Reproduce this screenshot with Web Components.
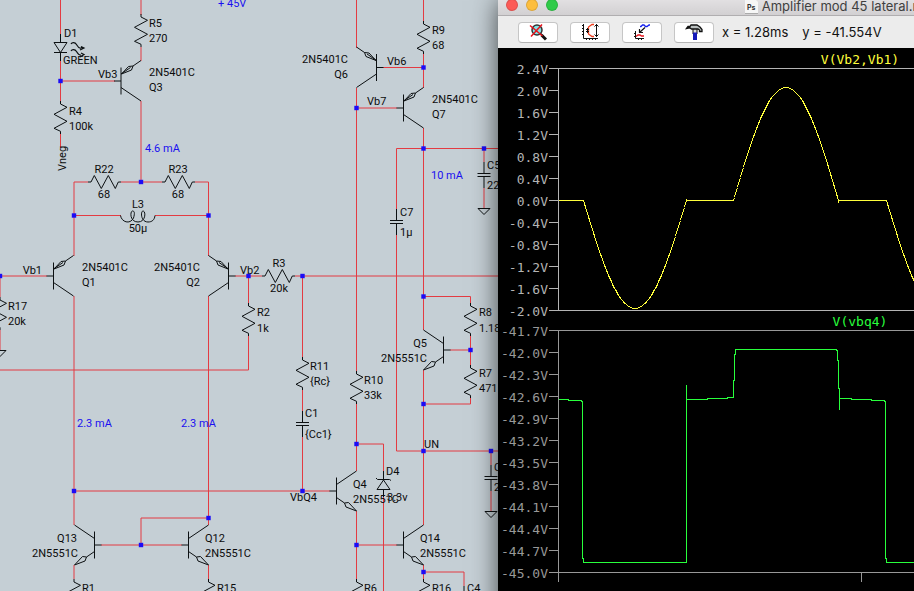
<!DOCTYPE html>
<html lang="en">
<head>
<meta charset="utf-8">
<title>Amplifier schematic</title>
<style>
html, body { margin: 0; height: 100%; overflow: hidden; background: #c5cfd5; }
body { font-family: "Noto Sans", sans-serif; }
</style>
</head>
<body>
<desk-top>
  <schematic-sheet></schematic-sheet>
  <plot-window slot="window"></plot-window>
</desk-top>

<script>
class DeskTop extends HTMLElement {
  constructor() {
    super();
    this.attachShadow({ mode: 'open' }).innerHTML = `
      <style>
        :host { display: block; position: relative; min-height: 100%; overflow: hidden; }
        ::slotted(plot-window) { position: absolute; left: 498px; top: -7px; }
      </style>
      <slot></slot><slot name="window"></slot>`;
  }
}

/* Schematic: wires, parts and labels on a free canvas */
class SchematicSheet extends HTMLElement {
  constructor() {
    super();
    const wires = `
      M60.5 0V35M60.5 60V102M60.5 134V148M60.5 81H115M141 0V15M141 47V61M141 101V182
      M74 182H88M121 182H162M195 182H208.5M74 182V256M208.5 182V256
      M74 215.5H121M155 215.5H208.5M0 276H47M235 276H262M295 276H498M0 276V297M0 330V350
      M248.5 276V304M248.5 336V370H0M74 296V525M208.5 296V525M74 491H330
      M208.5 518H141V545M101 545H182M74 565V579M208.5 565V579
      M302.5 276V358M302.5 390V411M302.5 437V491M356.5 0V48M356.5 88V371M356.5 404V471M356.5 511V579
      M356.5 108H397M356.5 545H397M356.5 444H383.5V471M383.5 497V600
      M498 148.5H396.5V209M396.5 235V451H498M423.5 0V22M423.5 54V88M423.5 67.5H383
      M423.5 128V330M423.5 370V525M423.5 565V579M423.5 572H464V586
      M423.5 296.5H470.5V304M470.5 336V365M470.5 398V404H423.5M450 350H470.5
      M484 148.5V162M484 188V208M491 451V465M491 491V511`;
    const dots = [[60.5,81],[141,182],[74,215.5],[208.5,215.5],[0,276],[248.5,276],[302.5,276],
      [74,491],[302.5,491],[208.5,518],[141,545],[356.5,108],[423.5,67.5],[423.5,148.5],[484,148.5],
      [423.5,296.5],[470.5,350],[423.5,404],[423.5,451],[491,451],[356.5,444],[356.5,545],[423.5,572]];
    const parts = {
      res: [[60.5,101],[141,14],[423.5,21],[0,297],[248.5,303],[302.5,357],[356.5,371],[470.5,303],
        [470.5,365],[74,579],[208.5,579],[356.5,579],[423.5,579]],
      hres: [[88,182],[162,182],[262,276]],
      pnp: [[121,81],[53.5,276],[403.5,108]],
      pnpm: [[228.5,276],[376.5,67.5]],
      npn: [[188.5,545],[336.5,491],[403.5,545]],
      npnm: [[94.5,545],[443.5,350]],
      cap: [[302.5,411],[396.5,209],[484,162],[491,465]],
      gnd: [[484,208],[491,511],[0,350]]
    };
    const attrs = { hres: ['res', ' rotate(-90)'], pnpm: ['pnp', ' scale(-1 1)'], npnm: ['npn', ' scale(-1 1)'] };
    const uses = Object.entries(parts).map(([k, list]) => {
      const [id, extra] = attrs[k] || [k, ''];
      return list.map(([x, y]) => `<use href="#${id}" transform="translate(${x} ${y})${extra}"/>`).join('');
    }).join('');
    /* x, baseline, text, anchor (s/m/e), class */
    const labels = [
      [64,37,'D1'],[63,64,'GREEN'],[98,78,'Vb3'],[69,115,'R4'],[69,130,'100k'],[149,27,'R5'],[149,42,'270'],
      [149,76,'2N5401C'],[149,91,'Q3'],[104,173,'R22','m'],[104,198,'68','m'],[178,173,'R23','m'],[178,198,'68','m'],
      [138,208,'L3','m'],[138,232,'50µ','m'],[42,274,'Vb1','e'],[82,271,'2N5401C'],[82,286,'Q1'],
      [200,271,'2N5401C','e'],[200,286,'Q2','e'],[240,274,'Vb2'],[8,310,'R17'],[8,325,'20k'],
      [257,316,'R2'],[257,332,'1k'],[279,267,'R3','m'],[279,292,'20k','m'],
      [77,542,'Q13','e'],[78,557,'2N5551C','e'],[205,542,'Q12'],[205,557,'2N5551C'],[82,592,'R1'],[217,592,'R15'],
      [348,63,'2N5401C','e'],[348,78,'Q6','e'],[387,65,'Vb6'],[367,105,'Vb7'],[432,34,'R9'],[432,49,'68'],
      [432,103,'2N5401C'],[432,118,'Q7'],[487,169,'C5'],[487,189,'220µ'],[400,216,'C7'],[400,236,'1µ'],
      [427,347,'Q5','e'],[427,362,'2N5551C','e'],[479,316,'R8'],[479,332,'1.18k'],[479,377,'R7'],[479,392,'471'],
      [310,370,'R11'],[310,385,'{Rc}'],[364,384,'R10'],[364,399,'33k'],[305,417,'C1'],[305,438,'{Cc1}'],
      [290,501,'VbQ4'],[353,488,'Q4'],[353,503,'2N5551C'],[386,475,'D4'],[387,501,'3.3v'],[424,448,'UN'],
      [420,542,'Q14'],[420,557,'2N5551C'],[364,592,'R6'],[432,592,'R16'],[467,592,'C4'],[494,471,'C6'],[494,491,'220µ'],
      [218,7,'+ 45V','','b'],[145,152,'4.6 mA','','b'],[77,427,'2.3 mA','','b'],[181,427,'2.3 mA','','b'],[431,179,'10 mA','','b']
    ];
    const anchor = { m: 'middle', e: 'end' };
    const texts = labels.map(([x, y, t, a, c]) =>
      `<text x="${x}" y="${y}" text-anchor="${anchor[a] || 'start'}"${c ? ' class="note"' : ''}>${t}</text>`).join('');
    this.attachShadow({ mode: 'open' }).innerHTML = `
      <style>
        :host { display: block; height: 100vh; background: #c5cfd5; }
        svg { display: block; width: 100%; height: 100%; }
        text { font: 11px Roboto, "Noto Sans", sans-serif; fill: #0c0c0c; }
        .note { fill: #1a10f0; }
        .wire { fill: none; stroke: #e33b42; stroke-width: 1; }
        .part { fill: none; stroke: #0c1012; stroke-width: 1; }
        .dot { fill: #1c0cf5; }
      </style>
      <svg role="img" aria-label="Amplifier schematic">
        <defs>
          <path id="res" d="M0 0V3L6.5 6.3L-6.5 13.3L6.5 20.3L-6.5 27.3L0 30.3V33"/>
          <path id="pnp" d="M-7 0H0M0 -13.5V13.5M0 6.5L20 20M0 -7L9.5 -13.5M12 -15L20 -20.5M0.5 -7L7.5 -14.5L12 -15L10.5 -11Z"/>
          <path id="npn" d="M-7 0H0M0 -13.5V13.5M0 -6.5L20 -20M0 6.5L8 12M20 20L12 11.5L8 12L9.5 16Z"/>
          <path id="cap" d="M0 0V11.5M-6.500 11.500H6.500M-6.500 14.500H6.500M0 14.500V26"/>
          <path id="gnd" d="M-6 0.500H6L0 6.500Z"/>
        </defs>
        <path class="wire" d="${wires}"/>
        <g class="part">${uses}
          <path d="M60.500 34V42.500M54 42.500H67L60.500 52.500ZM54 52.500H67M60.500 52V61"/>
          <path stroke-width="1.200" d="M71 44C72 42 75 42 76.500 44.500S79 49 81 48M81 47.500L84 48M80 50L84 48L81 46.500M71 51C72 49 75 49 76.500 51.500S79 55.500 81 55M80 57L84 54.500L81 53"/>
          <path d="M120.500 215.500C121.500 222 130 225 133.500 218C135 213 134.500 211 132.500 211C130 211 129.500 222 138 222C146 222 146 211 143 211C140.500 211 140.500 222 148 222C152 222 154.500 220 155 215.500"/>
          <path d="M383.500 471V480M376 478L377.500 479.500H389.500L391 480.500M383.500 480L377 489.500H390ZM383.500 489V497M464 586V600"/>
        </g>
        ${texts}
        <text transform="translate(66 171) rotate(-90)">Vneg</text>
        <g class="dot">${dots.map(([x, y]) => `<rect x="${x - 2.2}" y="${y - 2.2}" width="4.4" height="4.4"/>`).join('')}</g>
      </svg>`;
  }
}

class PlotWindow extends HTMLElement {
  constructor() {
    super();
    /* Differential input voltage: alternating half sines with flat gaps */
    let a = 'M0.5 132.500H25.500';
    for (let p = 25; p < 620; p += 303) {
      for (let i = 1; i <= 103; i++) a += `L${p + i + .5} ${132.5 + Math.round(108 * Math.sin(Math.PI * i / 103))}`;
      a += `V130.500V132.500H${p + 150.5}`;
      for (let i = 1; i <= 105; i++) a += `L${p + 150 + i + .5} ${132.5 - Math.round(113 * Math.sin(Math.PI * i / 105))}`;
      a += `V134.500V132.500H${p + 303.5}`;
    }
    let b = 'M0.5 69.500H10.500V70.500H23.500';
    for (let p = 0; p < 600; p += 303) {
      b += `L${p + 24.5} 72.500V228.500H${p + 25.5}V232.500H${p + 128.5}V54.500V69.500H${p + 149.5}V68.500H${p + 169.5}V67.500H${p + 175.5}` +
        `V50.500H${p + 176.5}V24.500H${p + 177.5}V19.500H${p + 278.5}V20.500H${p + 279.5}V30.500H${p + 280.5}V58.500H${p + 281.5}V79.500V68.500H${p + 293.5}V69.500H${p + 313.5}V70.500H${p + 326.5}`;
    }
    this.attachShadow({ mode: 'open' }).innerHTML = `
      <style>
        :host { display: flex; flex-direction: column; width: 684px; min-height: calc(100vh + 28px);
          background: #000; box-shadow: 0 8px 24px rgba(0,0,0,.65); }
        .tools { display: flex; align-items: center; gap: 12px; height: 32px; padding: 0 20px; background: #ececec; }
        .readout { display: flex; gap: 14px; margin-left: -4px; color: #111; font: 13px Inter, sans-serif; white-space: pre; }
      </style>
      <title-bar>Amplifier mod 45 lateral.raw</title-bar>
      <div class="tools">
        <tool-button label="Zoom to fit">
          <svg viewBox="0 0 18 18"><circle cx="8" cy="7" r="5" fill="#7fe4e8" stroke="#333" stroke-width="1.500"/><path d="M11.500 10.500L13 12" stroke="#111" stroke-width="1.500"/><path d="M12.500 12L17 16.500" stroke="#111" stroke-width="3"/><path d="M1 2.500L13.500 13M13 1.500L2 13.500" stroke="#e8141c" stroke-width="1.500"/></svg>
        </tool-button>
        <tool-button label="Autorange">
          <svg viewBox="0 0 18 18"><path d="M2.500 1V15.500H17" stroke="#111" fill="none"/><path d="M1 2.500H3M1 5.500H3M1 8.500H3M1 11.500H3M5.500 15V17M8.500 15V17M11.500 15V17M14.500 15V17" stroke="#111"/><path d="M13 1.500H11L7.500 4V11L11 13.500H13" fill="none" stroke="#f04020" stroke-width="1.300"/><path d="M15.500 1V14M13.500 3.500L15.500 1.500L17.500 3.500M13.500 11.500L15.500 13.500L17.500 11.500M6.500 5V10M5 6.500H8M5 8.500H8" fill="none" stroke="#111"/></svg>
        </tool-button>
        <tool-button label="Add trace">
          <svg viewBox="0 0 18 18"><path d="M7 3.500H8L9.500 2H11L12.500 3.500H14L16 2H17" fill="none" stroke="#1420f0" stroke-width="1.300"/><path d="M12 4.500L6.500 9.500M6.500 6V9.500H10" fill="none" stroke="#111" stroke-width="1.200"/><path d="M2.500 8V15.500H11M1 10.500H3M1 13.500H3M5.500 15V17M8.500 15V17" fill="none" stroke="#111"/><path d="M3 13.500L5 12H7L8.500 13H11" fill="none" stroke="#e8141c" stroke-width="1.300"/></svg>
        </tool-button>
        <tool-button label="Control panel">
          <svg viewBox="0 0 18 18"><path d="M8 5.500H12V11H8Z" fill="#ddd" stroke="#111"/><path d="M1.500 5.500L3 3.500H5L6 2H12L15 4L17 6.500V8.500H14.500V7L13 6H6.500L5 5H3.500Z" fill="#b9bfbf" stroke="#111" stroke-width="1.300"/><path d="M10 9.500V17" stroke="#1418b8" stroke-width="4"/></svg>
        </tool-button>
        <div class="readout"><span>x = 1.28ms</span><span>y = -41.554V</span></div>
      </div>
      <plot-pane name="V(Vb2,Vb1)" color="#ffff3c" line="#b4b4b4" from="24" step="4" scale="10"></plot-pane>
      <plot-pane name="V(vbq4)" color="#28ff3c" line="#989898" from="-417" step="3" scale="10" times="0ms 1ms"></plot-pane>`;
    const panes = this.shadowRoot.querySelectorAll('plot-pane');
    panes[0].trace = a;
    panes[1].trace = b;
  }
}

class TitleBar extends HTMLElement {
  constructor() {
    super();
    this.attachShadow({ mode: 'open' }).innerHTML = `
      <style>
        :host { display: grid; grid-template-columns: 60px 1fr 60px; align-items: center; height: 22px;
          border-bottom: 1px solid #b0aeb0; background: linear-gradient(#e9e7e9, #d2d0d2);
          font: 13px Inter, sans-serif; color: #404040; }
        .lights { display: flex; gap: 8px; padding: 2px 0 0 8px; }
        .lights button { width: 12px; height: 12px; padding: 0; border: 1px solid rgba(0,0,0,.12); border-radius: 50%; }
        h1 { display: flex; justify-content: center; align-items: center; gap: 4px; margin: 0; padding-top: 3px; font: inherit; white-space: nowrap; }
        svg { width: 13px; height: 16px; }
      </style>
      <div class="lights">
        <button aria-label="Close" style="background:#fc5b57"></button>
        <button aria-label="Minimize" style="background:#fdbe3f"></button>
        <button aria-label="Zoom" style="background:#30cb49"></button>
      </div>
      <h1><svg viewBox="0 0 13 16"><path d="M0 0H9L13 4V15H0Z" fill="#f6f6f6"/><path d="M0 15.500H13" stroke="#aaa"/><text x="2" y="12" font-family="Inter" font-size="7" font-weight="700" fill="#333">Ps</text></svg><slot></slot></h1>`;
  }
}

class ToolButton extends HTMLElement {
  constructor() {
    super();
    this.attachShadow({ mode: 'open' }).innerHTML = `
      <style>
        :host { display: block; }
        button { display: flex; align-items: center; justify-content: center; width: 40px; height: 21px; padding: 0;
          background: #fff; border: 1px solid #c6c6c6; border-bottom-color: #b4b4b4; border-radius: 4px; }
        ::slotted(svg) { width: 18px; height: 18px; }
      </style>
      <button type="button"><slot></slot></button>`;
  }
  connectedCallback() {
    this.shadowRoot.querySelector('button').setAttribute('aria-label', this.getAttribute('label'));
  }
}

class PlotPane extends HTMLElement {
  constructor() {
    super();
    this.attachShadow({ mode: 'open' });
  }
  set trace(d) {
    const at = n => this.getAttribute(n);
    const marks = Array.from({ length: 12 }, (_, i) => ((+at('from') - i * at('step')) / at('scale')).toFixed(1) + 'V');
    const times = at('times') ? at('times').split(' ') : [];
    this.shadowRoot.innerHTML = `
      <style>
        :host { display: grid; grid-template-columns: 60px 1fr; grid-template-rows: 20px 242px auto; padding-right: 20px;
          font: 13px/22px "DejaVu Sans Mono", monospace; color: ${at('line')}; }
        .name { grid-column: 2; padding-top: 1px; text-align: center; color: ${at('color')}; }
        ol { grid-column: 1; list-style: none; margin: -9px 0 -13px; padding: 0 10px 0 0; text-align: right; display: flex; flex-direction: column; align-items: flex-end; }
        svg { grid-column: 2; width: 100%; height: 242px; overflow: visible; shape-rendering: crispEdges; fill: none; }
        .times { grid-column: 2; display: flex; gap: 279px; margin: 13px 0 0 -12px; }
      </style>
      <div class="name">${at('name')}</div>
      <ol>${marks.map(m => `<li>${m}</li>`).join('')}</ol>
      <svg role="img" aria-label="${at('name')}">
        <g stroke="${at('line')}">
          ${marks.map((_, i) => `<path d="M-9 ${i * 22 + .5}H0"/>`).join('')}
          <path d="M0.500 0V${times.length ? 252 : 242}M0 0.500H604M0 242.500H604"/>
          ${times.length ? '<path d="M303.500 242V252"/>' : ''}
        </g>
        <path stroke="${at('color')}" d="${d}"/>
      </svg>
      ${times.length ? `<div class="times">${times.map(t => `<span>${t}</span>`).join('')}</div>` : ''}`;
  }
}

customElements.define('title-bar', TitleBar);
customElements.define('tool-button', ToolButton);
customElements.define('plot-pane', PlotPane);
customElements.define('plot-window', PlotWindow);
customElements.define('schematic-sheet', SchematicSheet);
customElements.define('desk-top', DeskTop);
</script>
</body>
</html>
